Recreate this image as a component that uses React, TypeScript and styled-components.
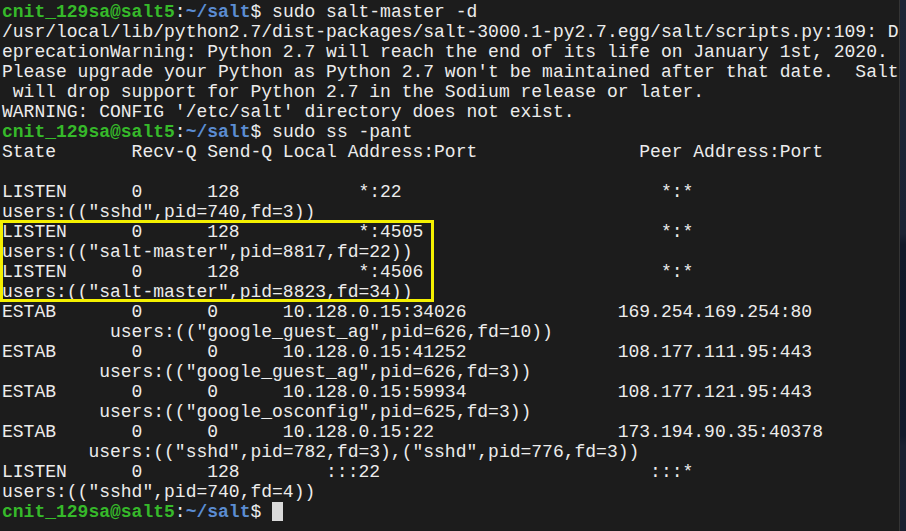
import React from "react";
import styled, { createGlobalStyle } from "styled-components";

const Global = createGlobalStyle`
  html, body { margin: 0; padding: 0; background: #1c1c1c; overflow: hidden; }
  #root { width: 906px; height: 531px; }
`;

const Screen = styled.div`
  display: flex;
  width: 906px;
  height: 531px;
`;

const Terminal = styled.div`
  position: relative;
  width: 900px;
  height: 531px;
  box-sizing: border-box;
  padding: 2px 0 0 2px;
  background: #1c1c1c;
  border-right: 1px solid #343434;
  font-family: "Liberation Mono", "Courier New", monospace;
  font-size: 18px;
  color: #ececec;
`;

const Desktop = styled.div`
  flex: 1;
  background: linear-gradient(
    to bottom,
    #1e2536 0%,
    #1b2334 44%,
    #111828 46%,
    #121a2b 82%,
    #1a2131 84%,
    #1a2030 100%
  );
`;

const Line = styled.div`
  height: 20px;
  line-height: 20px;
  white-space: pre;
`;

const User = styled.span`
  color: #36b92a;
  font-weight: bold;
`;

const Path = styled.span`
  color: #5b8dd2;
  font-weight: bold;
`;

const Cursor = styled.span`
  display: inline-block;
  width: 11px;
  height: 19px;
  vertical-align: -4px;
  background: #d9d9d9;
`;

const Highlight = styled.div`
  position: absolute;
  left: 0;
  top: 220px;
  width: 434px;
  height: 82px;
  box-sizing: border-box;
  border: 3px solid #f4f000;
  pointer-events: none;
`;

const cols = (fields: [number, string][]) => {
  let s = "";
  for (const [c, t] of fields) {
    while (s.length < c) s += " ";
    s += t;
  }
  return s;
};

const Prompt: React.FC<{ cmd?: string; cursor?: boolean }> = ({ cmd, cursor }) => (
  <Line>
    <User>cnit_129sa@salt5</User>:<Path>~/salt</Path>${" "}
    {cmd}
    {cursor && <Cursor />}
  </Line>
);

const output: string[] = [
  "/usr/local/lib/python2.7/dist-packages/salt-3000.1-py2.7.egg/salt/scripts.py:109: D",
  "eprecationWarning: Python 2.7 will reach the end of its life on January 1st, 2020.",
  "Please upgrade your Python as Python 2.7 won't be maintained after that date.  Salt",
  " will drop support for Python 2.7 in the Sodium release or later.",
  "WARNING: CONFIG '/etc/salt' directory does not exist.",
];

const ssOutput: string[] = [
  cols([[0, "State"], [12, "Recv-Q"], [19, "Send-Q"], [26, "Local Address:Port"], [59, "Peer Address:Port"]]),
  "",
  cols([[0, "LISTEN"], [12, "0"], [19, "128"], [33, "*:22"], [61, "*:*"]]),
  'users:(("sshd",pid=740,fd=3))',
  cols([[0, "LISTEN"], [12, "0"], [19, "128"], [33, "*:4505"], [61, "*:*"]]),
  'users:(("salt-master",pid=8817,fd=22))',
  cols([[0, "LISTEN"], [12, "0"], [19, "128"], [33, "*:4506"], [61, "*:*"]]),
  'users:(("salt-master",pid=8823,fd=34))',
  cols([[0, "ESTAB"], [12, "0"], [19, "0"], [26, "10.128.0.15:34026"], [57, "169.254.169.254:80"]]),
  cols([[10, 'users:(("google_guest_ag",pid=626,fd=10))']]),
  cols([[0, "ESTAB"], [12, "0"], [19, "0"], [26, "10.128.0.15:41252"], [57, "108.177.111.95:443"]]),
  cols([[9, 'users:(("google_guest_ag",pid=626,fd=3))']]),
  cols([[0, "ESTAB"], [12, "0"], [19, "0"], [26, "10.128.0.15:59934"], [57, "108.177.121.95:443"]]),
  cols([[9, 'users:(("google_osconfig",pid=625,fd=3))']]),
  cols([[0, "ESTAB"], [12, "0"], [19, "0"], [26, "10.128.0.15:22"], [57, "173.194.90.35:40378"]]),
  cols([[8, 'users:(("sshd",pid=782,fd=3),("sshd",pid=776,fd=3))']]),
  cols([[0, "LISTEN"], [12, "0"], [19, "128"], [30, ":::22"], [60, ":::*"]]),
  'users:(("sshd",pid=740,fd=4))',
];

export default function App() {
  return (
    <>
      <Global />
      <Screen>
        <Terminal>
          <Prompt cmd="sudo salt-master -d" />
          {output.map((l, i) => (
            <Line key={"a" + i}>{l}</Line>
          ))}
          <Prompt cmd="sudo ss -pant" />
          {ssOutput.map((l, i) => (
            <Line key={"b" + i}>{l}</Line>
          ))}
          <Prompt cursor />
          <Highlight />
        </Terminal>
        <Desktop />
      </Screen>
    </>
  );
}
